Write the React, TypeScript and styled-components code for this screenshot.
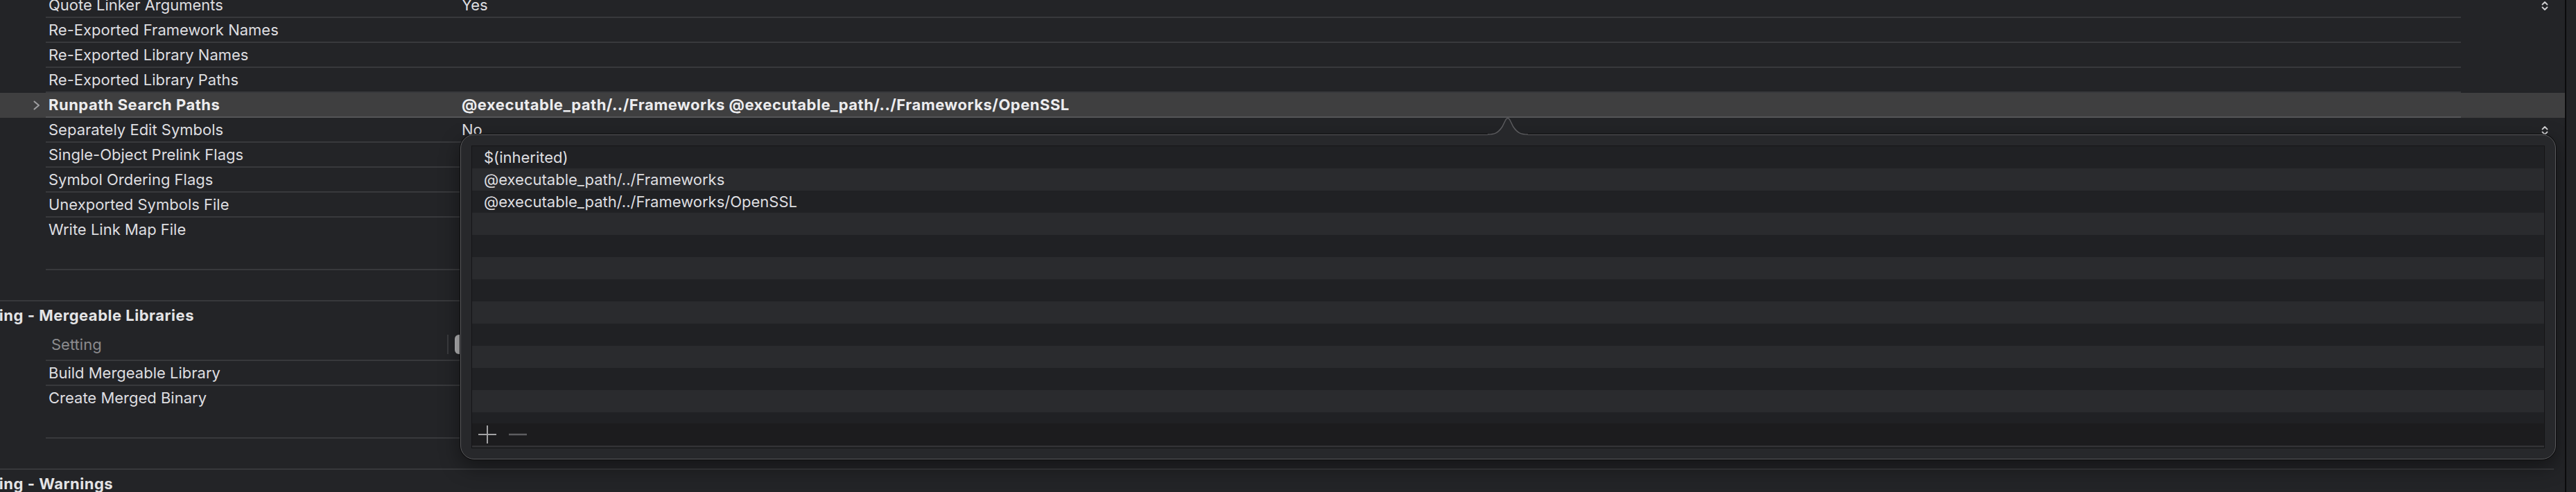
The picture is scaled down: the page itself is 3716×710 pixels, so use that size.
import styled, { createGlobalStyle } from "styled-components";

const GlobalStyle = createGlobalStyle`
  html, body {
    margin: 0;
    padding: 0;
    background: #232427;
  }
  body {
    font-family: Inter, "Noto Sans", "Liberation Sans", sans-serif;
    font-size: 22px;
    color: #dedee0;
    -webkit-font-smoothing: antialiased;
  }
  #root {
    width: 3716px;
    height: 710px;
    overflow: hidden;
  }
`;

const Window = styled.div`
  display: flex;
  width: 3716px;
  height: 710px;
  overflow: hidden;
  background: #232427;
`;

const Editor = styled.div`
  position: relative;
  flex: none;
  width: 3700px;
  height: 100%;
  overflow: hidden;
`;

const SplitLine = styled.div`
  flex: none;
  width: 2px;
  background: #0b0b0c;
`;

const Sidebar = styled.div`
  flex: 1;
  background: #222326;
`;

const Scroller = styled.div`
  margin-top: -10px;
`;

const SectionRule = styled.div`
  height: 2px;
  margin: 43px 16px 0 0;
  background: #38393c;
`;

const SectionTitle = styled.div`
  height: 40px;
  display: flex;
  align-items: center;
  margin-left: -48px;
  font-weight: 700;
  letter-spacing: 0.5px;
  color: #e4e4e6;
  white-space: nowrap;
`;

const ColumnHeader = styled.div`
  display: flex;
  align-items: center;
  height: 44px;
  margin: 0 150px 0 66px;
  border-bottom: 2px solid #38393c;
`;

const ColumnLabel = styled.div`
  width: 571px;
  padding-left: 8px;
  color: #8b8b8e;
`;

const ColumnDivider = styled.div`
  width: 2px;
  height: 28px;
  background: #3a3b3e;
`;

const LevelChip = styled.div`
  margin-left: 9px;
  width: 26px;
  height: 28px;
  border-radius: 6px;
  background: #b3b3b5;
`;

const Row = styled.div<{ $selected?: boolean }>`
  display: grid;
  grid-template-columns: 66px 1fr 150px;
  height: 36px;
  background: ${(p) => (p.$selected ? "#3f3f40" : "transparent")};
`;

const Gutter = styled.div`
  display: flex;
  align-items: center;
  padding-left: 47px;
`;

const Cells = styled.div<{ $last?: boolean; $selected?: boolean }>`
  display: flex;
  align-items: center;
  border-bottom: 2px solid
    ${(p) => (p.$last ? "transparent" : p.$selected ? "#555557" : "#38393c")};
`;

const Name = styled.div<{ $bold?: boolean }>`
  flex: none;
  width: 600px;
  padding-left: 4px;
  box-sizing: border-box;
  white-space: nowrap;
  font-weight: ${(p) => (p.$bold ? 700 : 400)};
  letter-spacing: ${(p) => (p.$bold ? "0.5px" : "0")};
  color: ${(p) => (p.$bold ? "#ececee" : "#dedee0")};
`;

const Value = styled(Name)`
  flex: 1;
  width: auto;
  padding-left: 0;
`;

const Trailing = styled.div`
  display: flex;
  align-items: center;
  justify-content: flex-end;
  padding-right: 24px;
`;

const TableEnd = styled.div`
  height: 38px;
  margin: 0 150px 0 66px;
  border-bottom: 2px solid #38393c;
`;

const Popover = styled.div`
  position: absolute;
  left: 664px;
  top: 194px;
  width: 3023px;
  height: 469px;
  box-sizing: border-box;
  padding: 15px;
  border: 1.5px solid #5a5a5d;
  border-radius: 20px;
  background: #27282b;
  box-shadow: 0 0 0 1px #0c0c0d, 0 10px 30px rgba(0, 0, 0, 0.45);
`;

const Arrow = styled.svg`
  position: absolute;
  left: 1481px;
  top: -27.5px;
  overflow: visible;
`;

const ListPanel = styled.div`
  display: flex;
  flex-direction: column;
  height: 100%;
  box-sizing: border-box;
  border: 1px solid #151517;
`;

const List = styled.div`
  height: 400px;
  overflow: hidden;
`;

const ListItem = styled.div<{ $odd: boolean }>`
  display: flex;
  align-items: center;
  height: 32px;
  padding-left: 17px;
  white-space: nowrap;
  color: #dedee0;
  background: ${(p) => (p.$odd ? "#2a2b2e" : "#202124")};
`;

const Toolbar = styled.div`
  display: flex;
  align-items: center;
  gap: 18px;
  height: 34px;
  box-sizing: border-box;
  padding: 0 0 0 9px;
  background: #1c1c1e;
  border-bottom: 2px solid #333336;
`;

const ToolButton = styled.svg`
  display: block;
`;

function Chevron() {
  return (
    <svg width="12" height="14" viewBox="0 0 12 14">
      <path d="M2.5 1.5 L9 7 L2.5 12.5" fill="none" stroke="#a0a0a2" strokeWidth="2" strokeLinecap="round" strokeLinejoin="round" />
    </svg>
  );
}

function Stepper() {
  return (
    <svg width="10" height="15" viewBox="0 0 10 15">
      <path d="M1.5 5.5 L5 2 L8.5 5.5 M1.5 9.5 L5 13 L8.5 9.5" fill="none" stroke="#cfcfd1" strokeWidth="1.8" strokeLinecap="round" strokeLinejoin="round" />
    </svg>
  );
}

type Setting = {
  name: string;
  value?: string;
  bold?: boolean;
  stepper?: boolean;
  expandable?: boolean;
};

const general: Setting[] = [
  { name: "Quote Linker Arguments", value: "Yes", stepper: true },
  { name: "Re-Exported Framework Names" },
  { name: "Re-Exported Library Names" },
  { name: "Re-Exported Library Paths" },
  {
    name: "Runpath Search Paths",
    value: "@executable_path/../Frameworks @executable_path/../Frameworks/OpenSSL",
    bold: true,
    expandable: true,
  },
  { name: "Separately Edit Symbols", value: "No", stepper: true },
  { name: "Single-Object Prelink Flags" },
  { name: "Symbol Ordering Flags" },
  { name: "Unexported Symbols File" },
  { name: "Write Link Map File", value: "No", stepper: true },
];

const mergeable: Setting[] = [
  { name: "Build Mergeable Library", value: "No", stepper: true },
  { name: "Create Merged Binary", value: "No", stepper: true },
];

const searchPaths = [
  "$(inherited)",
  "@executable_path/../Frameworks",
  "@executable_path/../Frameworks/OpenSSL",
  "", "", "", "", "", "", "", "", "", "",
];

function SettingRows({ rows, selected }: { rows: Setting[]; selected?: string }) {
  return (
    <>
      {rows.map((row, index) => {
        const isSelected = row.name === selected;
        return (
          <Row key={row.name} $selected={isSelected}>
            <Gutter>{row.expandable ? <Chevron /> : null}</Gutter>
            <Cells $last={index === rows.length - 1} $selected={isSelected}>
              <Name $bold={row.bold}>{row.name}</Name>
              <Value $bold={row.bold}>{row.value}</Value>
            </Cells>
            <Trailing>{row.stepper ? <Stepper /> : null}</Trailing>
          </Row>
        );
      })}
      <TableEnd />
    </>
  );
}

export default function App() {
  return (
    <Window>
      <GlobalStyle />
      <Editor>
        <Scroller>
          <SettingRows rows={general} selected="Runpath Search Paths" />

          <SectionRule />
          <SectionTitle>Linking - Mergeable Libraries</SectionTitle>
          <ColumnHeader>
            <ColumnLabel>Setting</ColumnLabel>
            <ColumnDivider />
            <LevelChip />
          </ColumnHeader>
          <SettingRows rows={mergeable} />

          <SectionRule />
          <SectionTitle>Linking - Warnings</SectionTitle>
        </Scroller>

        <Popover>
          <Arrow width="58" height="30" viewBox="0 0 58 30">
            <path
              d="M0 26 C10 26 15 24 21 15 L26 5 Q29 0 32 5 L37 15 C43 24 48 26 58 26 L58 30 L0 30 Z"
              fill="#27282b"
            />
            <path
              d="M0 26 C10 26 15 24 21 15 L26 5 Q29 0 32 5 L37 15 C43 24 48 26 58 26"
              fill="none"
              stroke="#5a5a5d"
              strokeWidth="1.5"
            />
          </Arrow>
          <ListPanel>
            <List>
              {searchPaths.map((path, index) => (
                <ListItem key={index} $odd={index % 2 === 1}>
                  {path}
                </ListItem>
              ))}
            </List>
            <Toolbar>
              <ToolButton width="26" height="26" viewBox="0 0 26 26">
                <path d="M13 0 V26 M0 13 H26" stroke="#a2a2a4" strokeWidth="2" />
              </ToolButton>
              <ToolButton width="26" height="26" viewBox="0 0 26 26">
                <path d="M0 13 H26" stroke="#5d5d60" strokeWidth="2.5" />
              </ToolButton>
            </Toolbar>
          </ListPanel>
        </Popover>
      </Editor>
      <SplitLine />
      <Sidebar />
    </Window>
  );
}
